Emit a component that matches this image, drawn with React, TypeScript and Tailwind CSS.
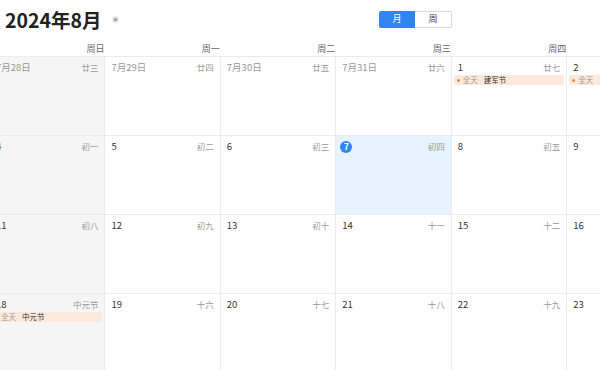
import React from "react";

type Cell = {
  label: string;
  lunar: string;
  other?: boolean;
  today?: boolean;
  event?: string;
};

const rows: Cell[][] = [
  [
    { label: "7月28日", lunar: "廿三", other: true },
    { label: "7月29日", lunar: "廿四", other: true },
    { label: "7月30日", lunar: "廿五", other: true },
    { label: "7月31日", lunar: "廿六", other: true },
    { label: "1", lunar: "廿七", event: "建军节" },
    { label: "2", lunar: "廿八", event: "" },
    { label: "3", lunar: "廿九" },
  ],
  [
    { label: "4", lunar: "初一" },
    { label: "5", lunar: "初二" },
    { label: "6", lunar: "初三" },
    { label: "7", lunar: "初四", today: true },
    { label: "8", lunar: "初五" },
    { label: "9", lunar: "初六" },
    { label: "10", lunar: "初七" },
  ],
  [
    { label: "11", lunar: "初八" },
    { label: "12", lunar: "初九" },
    { label: "13", lunar: "初十" },
    { label: "14", lunar: "十一" },
    { label: "15", lunar: "十二" },
    { label: "16", lunar: "十三" },
    { label: "17", lunar: "十四" },
  ],
  [
    { label: "18", lunar: "中元节", event: "中元节" },
    { label: "19", lunar: "十六" },
    { label: "20", lunar: "十七" },
    { label: "21", lunar: "十八" },
    { label: "22", lunar: "十九" },
    { label: "23", lunar: "二十" },
    { label: "24", lunar: "廿一" },
  ],
];

const weekdays = ["周日", "周一", "周二", "周三", "周四", "周五", "周六"];

export default function App() {
  return (
    <div
      className="w-[600px] h-[370px] overflow-hidden bg-white relative"
      style={{ fontFamily: '"Noto Sans CJK SC", "Noto Sans", sans-serif' }}
    >
      <div className="flex items-center h-[40px] pl-[5px]">
        <div className="w-[96px] whitespace-nowrap text-[19.5px] font-bold text-[#222] leading-none">
          2024年8月
        </div>
        <div className="ml-[11px] mt-[-2px] w-[7px] h-[7px] rounded-full bg-[#e4e4e4] flex items-center justify-center">
          <div className="w-[3px] h-[3px] rounded-full bg-[#999]" />
        </div>
        <div className="ml-[260px] mt-[-2px] flex h-[17px] text-[9px]">
          <div className="w-[36px] bg-[#2f86f0] text-white flex items-center justify-center rounded-l-[2px]">
            月
          </div>
          <div className="w-[37px] border border-[#d9d9d9] border-l-0 text-[#444] flex items-center justify-center rounded-r-[2px]">
            周
          </div>
        </div>
      </div>
      <div className="ml-[-10px] w-[808px]">
        <div className="grid grid-cols-7 h-[16px]">
          {weekdays.map((w) => (
            <div key={w} className="text-right pr-[1px] text-[9px] leading-[17px] text-[#666]">
              {w}
            </div>
          ))}
        </div>
        <div className="border-t border-[#ebebeb]">
          {rows.map((row, ri) => (
            <div key={ri} className="grid grid-cols-7 h-[79px] border-b border-[#ebebeb]">
              {row.map((c, ci) => {
                const weekend = ci === 0 || ci === 6;
                const bg = c.today ? "bg-[#e6f2fd]" : weekend ? "bg-[#f5f5f5]" : "bg-white";
                return (
                  <div key={ci} className={`${bg} border-r border-[#ebebeb] flex flex-col`}>
                    <div className="flex items-center justify-between pl-[6px] pr-[6px] pt-[4px] h-[17px]">
                      {c.today ? (
                        <div className="w-[12px] h-[12px] rounded-full bg-[#2f86f0] text-white text-[9px] font-bold flex items-center justify-center leading-none -ml-[2px]">
                          {c.label}
                        </div>
                      ) : (
                        <div
                          className={`text-[9.5px] leading-none ${
                            c.other ? "text-[#999]" : "text-[#333]"
                          }`}
                        >
                          {c.label}
                        </div>
                      )}
                      <div className="text-[8.5px] leading-none text-[#999]">{c.lunar}</div>
                    </div>
                    {c.event !== undefined && (
                      <div className="mx-[2px] mt-[1px] h-[10px] bg-[#fde9dc] rounded-[2px] flex items-center pl-[3px] text-[7.5px] leading-none">
                        <div className="w-[3px] h-[3px] rounded-full bg-[#f08a3c]" />
                        <span className="ml-[3px] text-[#999]">全天</span>
                        {c.event && <span className="ml-[6px] text-[#333]">{c.event}</span>}
                      </div>
                    )}
                  </div>
                );
              })}
            </div>
          ))}
        </div>
      </div>
    </div>
  );
}
